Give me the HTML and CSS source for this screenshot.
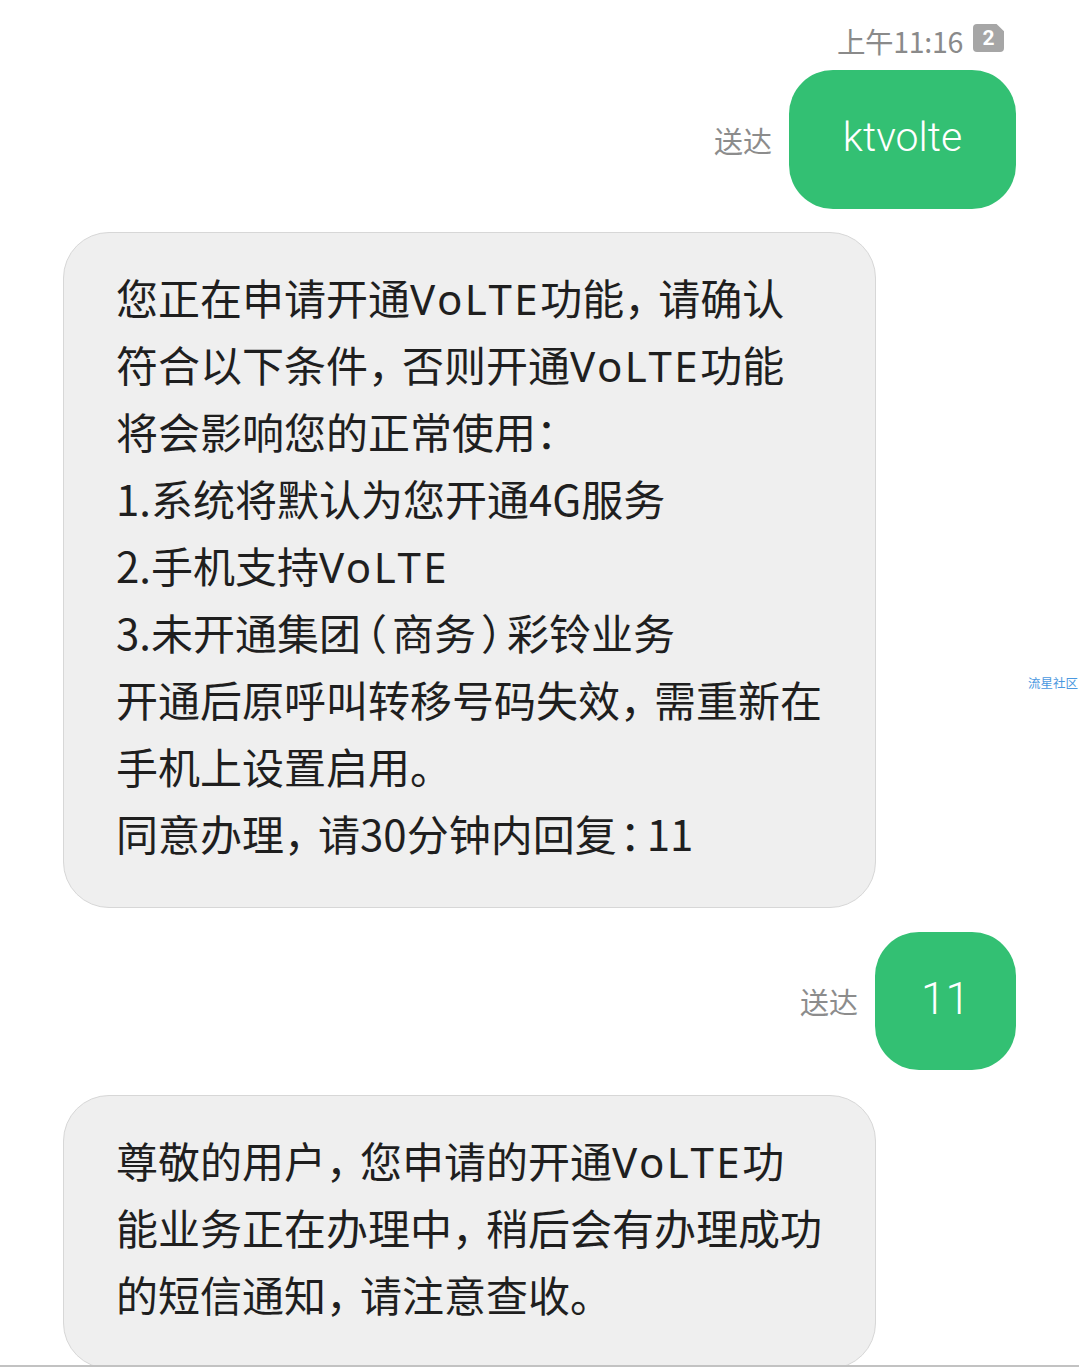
FILE: index.html
```html
<!DOCTYPE html>
<html lang="zh-CN">
<head>
<meta charset="utf-8">
<title>短信</title>
<link rel="stylesheet" href="styles.css">
</head>
<body>
<div class="screen">
  <div class="time-row">
    <span class="time">上午11:16</span>
    <span class="sim-badge">2</span>
  </div>

  <div class="out-row out-row--first">
    <span class="status">送达</span>
    <div class="bubble-out bubble-out--word">ktvolte</div>
  </div>

  <div class="bubble-in bubble-in--first">
    <div class="line">您正在申请开通<span class="lat">VoLTE</span>功能<span class="comma">，</span>请确认</div>
    <div class="line">符合以下条件<span class="comma">，</span>否则开通<span class="lat">VoLTE</span>功能</div>
    <div class="line">将会影响您的正常使用：</div>
    <div class="line">1.系统将默认为您开通4G服务</div>
    <div class="line">2.手机支持<span class="lat">VoLTE</span></div>
    <div class="line">3.未开通集团<span class="paren">（</span>商务<span class="paren">）</span>彩铃业务</div>
    <div class="line">开通后原呼叫转移号码失效<span class="comma">，</span>需重新在</div>
    <div class="line">手机上设置启用。</div>
    <div class="line">同意办理<span class="comma">，</span>请30分钟内回复<span class="colon">：</span>11</div>
  </div>

  <div class="out-row out-row--second">
    <span class="status">送达</span>
    <div class="bubble-out bubble-out--num">11</div>
  </div>

  <div class="bubble-in bubble-in--second">
    <div class="line">尊敬的用户<span class="comma">，</span>您申请的开通<span class="lat">VoLTE</span>功</div>
    <div class="line">能业务正在办理中<span class="comma">，</span>稍后会有办理成功</div>
    <div class="line">的短信通知<span class="comma">，</span>请注意查收。</div>
  </div>

  <span class="watermark">流星社区</span>
</div>
</body>
</html>
```

FILE: styles.css
```css
html, body {
  margin: 0;
  padding: 0;
  background: #ffffff;
}

body {
  font-family: "Noto Sans CJK SC", "Noto Sans", sans-serif;
}

.screen {
  position: relative;
  height: 1367px;
  box-sizing: border-box;
  overflow: hidden;
  border-bottom: 2px solid #c2c2c2;
  display: flex;
  flex-direction: column;
  padding: 24px 63px 0 63px;
}

.time-row {
  display: flex;
  justify-content: flex-end;
  align-items: flex-start;
  gap: 10px;
  padding-right: 12px;
  height: 34px;
}

.time {
  font-size: 28.5px;
  line-height: 34px;
  color: #8a8a8a;
  letter-spacing: -0.3px;
}

.sim-badge {
  width: 31px;
  height: 28px;
  background: #a6a6a6;
  border-radius: 4px;
  clip-path: polygon(0 0, 76% 0, 100% 26%, 100% 100%, 0 100%);
  color: #ffffff;
  font-family: "Roboto", "Liberation Sans", sans-serif;
  font-weight: 700;
  font-size: 21px;
  line-height: 29px;
  text-align: center;
}

.out-row {
  display: flex;
  justify-content: flex-end;
  align-items: center;
  gap: 17px;
}

.out-row--first {
  margin-top: 12px;
}

.out-row--second {
  margin-top: 24px;
}

.status {
  font-size: 29px;
  color: #8c8c8c;
  line-height: 40px;
}

.bubble-out {
  background: #33c073;
  color: #ffffff;
  height: 139px;
  border-radius: 44px;
  display: flex;
  align-items: center;
  justify-content: center;
  box-sizing: border-box;
  font-family: "Roboto", "Liberation Sans", sans-serif;
}

.bubble-out--word {
  width: 227px;
  font-size: 41px;
  font-weight: 300;
  padding-bottom: 6px;
}

.bubble-out--num {
  width: 141px;
  height: 138px;
  font-size: 44px;
  font-weight: 300;
  padding-bottom: 4px;
}

.bubble-in {
  width: 813px;
  box-sizing: border-box;
  background: #efefef;
  border: 1px solid #d7d7d7;
  border-radius: 46px;
  padding: 30px 20px 41px 52px;
  color: #1f1f1f;
  font-size: 42px;
  line-height: 67px;
}

.bubble-in--first {
  margin-top: 23px;
}

.bubble-in--second {
  margin-top: 25px;
  flex-shrink: 0;
}

.line {
  white-space: nowrap;
  height: 67px;
}

.lat {
  font-family: "Noto Sans", "Open Sans", sans-serif;
  letter-spacing: 2.5px;
  line-height: 1;
}

.comma {
  font-feature-settings: "halt";
  padding-right: 13px;
}

.colon {
  font-feature-settings: "halt";
  padding: 0 6px 0 3px;
}

.paren {
  font-feature-settings: "halt";
  padding: 0 5px;
}

.watermark {
  position: absolute;
  left: 1028px;
  top: 675px;
  font-size: 12.5px;
  line-height: 16px;
  color: #4a98e0;
  white-space: nowrap;
}
```
